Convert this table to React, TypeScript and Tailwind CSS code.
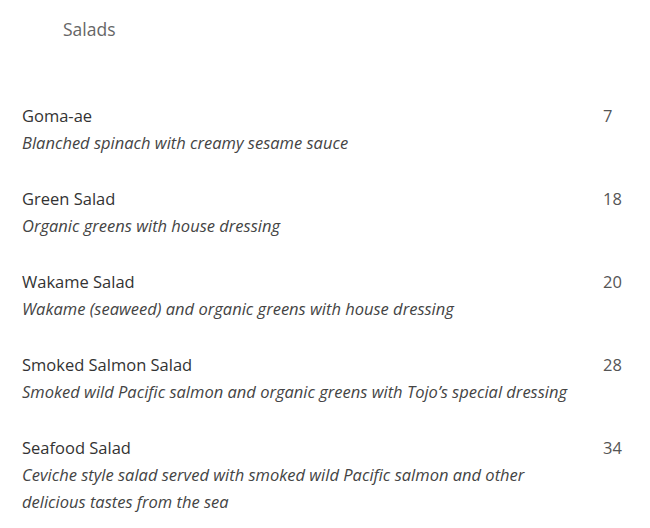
import React from "react";

const items = [
  { name: "Goma-ae", desc: "Blanched spinach with creamy sesame sauce", price: "7" },
  { name: "Green Salad", desc: "Organic greens with house dressing", price: "18" },
  { name: "Wakame Salad", desc: "Wakame (seaweed) and organic greens with house dressing", price: "20" },
  { name: "Smoked Salmon Salad", desc: "Smoked wild Pacific salmon and organic greens with Tojo\u2019s special dressing", price: "28" },
  { name: "Seafood Salad", desc: "Ceviche style salad served with smoked wild Pacific salmon and other delicious tastes from the sea", price: "34" },
];

export default function App() {
  return (
    <div className="w-[650px] h-[528px] bg-white overflow-hidden font-['Open_Sans',sans-serif] text-[16.5px] leading-[27px]">
      <div className="pt-[16px] pl-[63px] text-[#666] text-[17.5px]">Salads</div>
      <div className="mt-[59px] pl-[22px] flex flex-col gap-[29px]">
        {items.map((it) => (
          <div key={it.name} className="flex">
            <div className="w-[560px]">
              <div className="text-[#333]">{it.name}</div>
              <div className="italic text-[#444]">{it.desc}</div>
            </div>
            <div className="ml-[21px] text-[#555]">{it.price}</div>
          </div>
        ))}
      </div>
    </div>
  );
}
